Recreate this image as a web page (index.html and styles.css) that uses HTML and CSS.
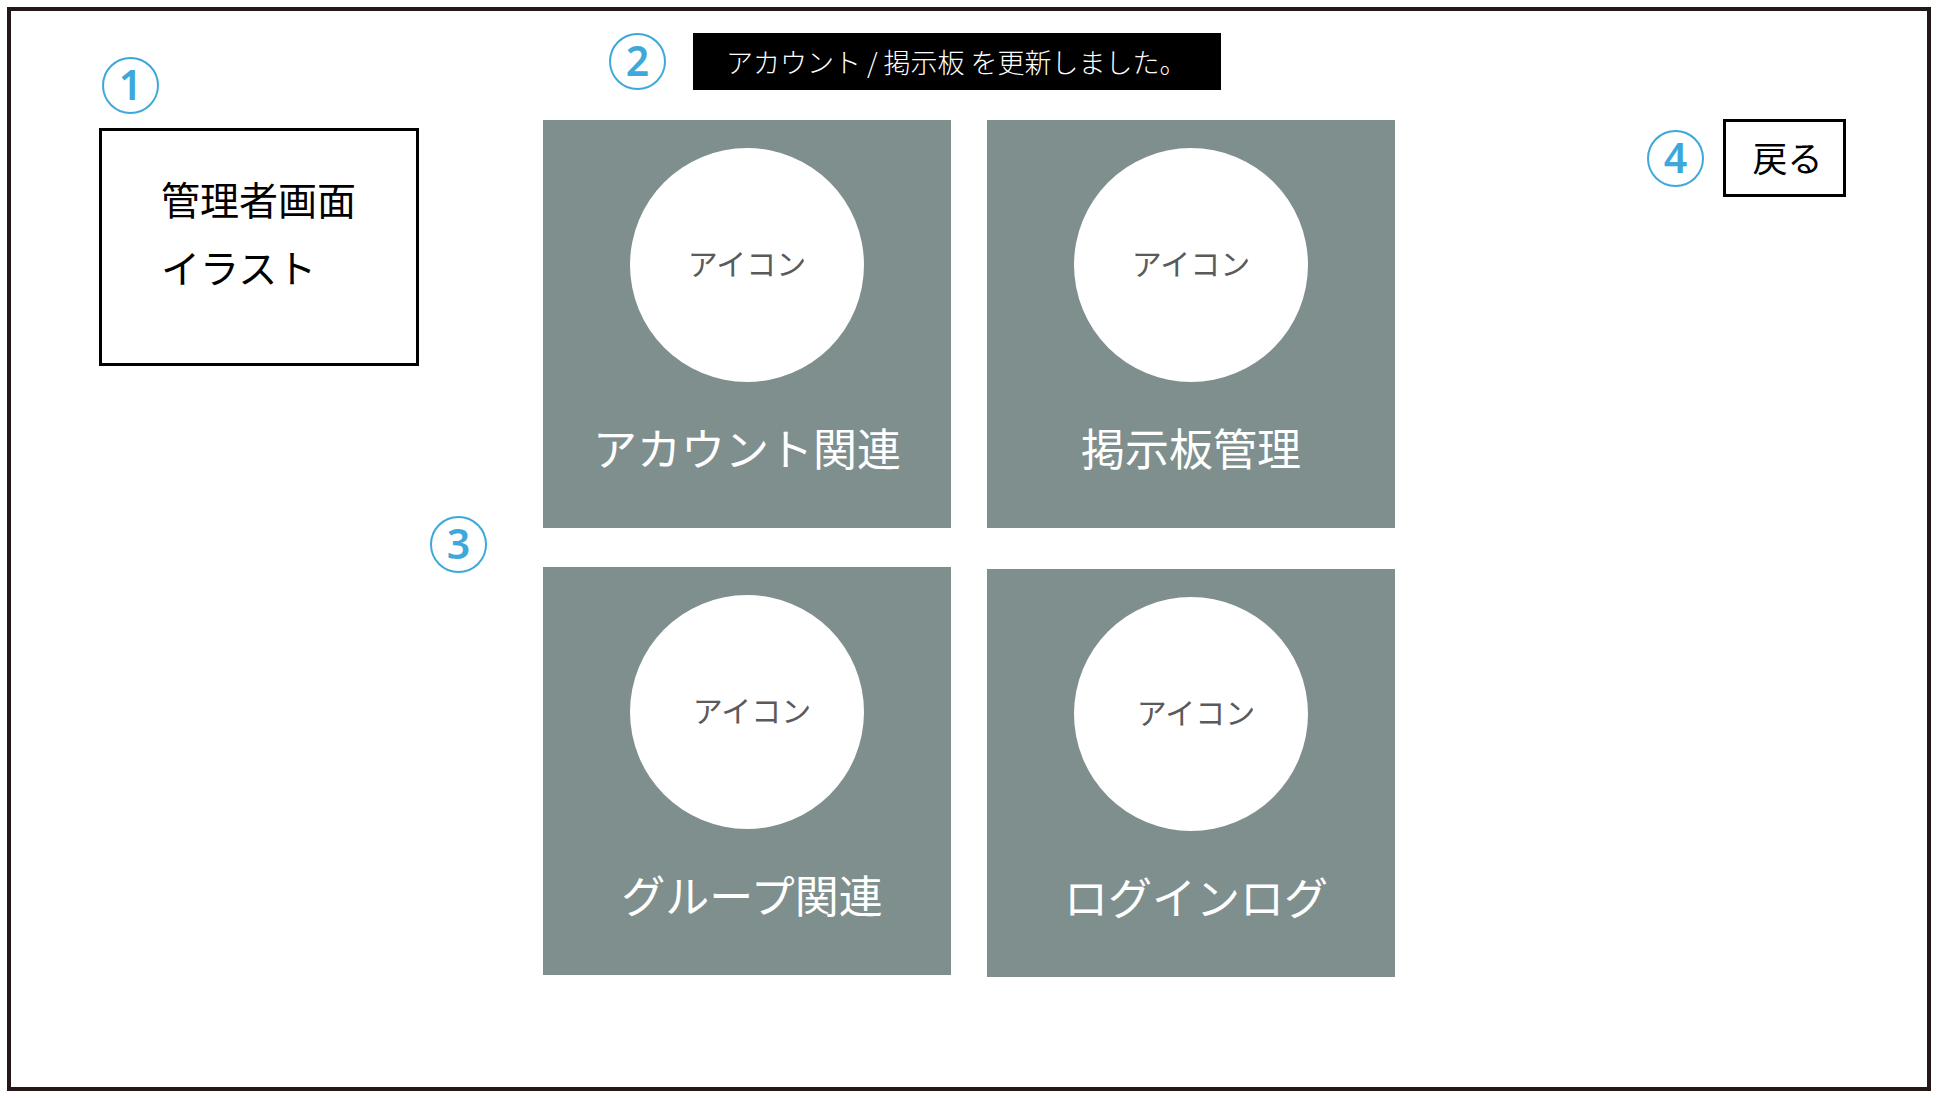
FILE: index.html
```html
<html>
    <head>
        <meta charset="utf-8">
        <title>管理者画面</title>
        <link rel="stylesheet" href="styles.css">
    </head>
    <body>
        <div class="frame">
            <div class="side">
                <div class="marker marker-side">1</div>
                <div class="illust">
                    <div>管理者画面</div>
                    <div>イラスト</div>
                </div>
            </div>

            <main class="center">
                <div class="toast-row">
                    <div class="marker">2</div>
                    <div class="toast">アカウント / 掲示板 を更新しました。</div>
                </div>
                <div class="menu-row">
                    <div class="marker marker-menu">3</div>
                    <div class="menu">
                        <div class="menu-card">
                            <div class="menu-icon">アイコン</div>
                            <div class="menu-label">アカウント関連</div>
                        </div>
                        <div class="menu-card">
                            <div class="menu-icon">アイコン</div>
                            <div class="menu-label">掲示板管理</div>
                        </div>
                        <div class="menu-card menu-card--shift">
                            <div class="menu-icon">アイコン</div>
                            <div class="menu-label">グループ関連</div>
                        </div>
                        <div class="menu-card menu-card--shift menu-card--low">
                            <div class="menu-icon">アイコン</div>
                            <div class="menu-label">ログインログ</div>
                        </div>
                    </div>
                </div>
            </main>

            <div class="right">
                <div class="marker">4</div>
                <div class="back-button">戻る</div>
            </div>
        </div>
    </body>
</html>
```

FILE: styles.css
```css
body {
    margin: 0;
    background: #fff;
    font-family: "Noto Sans CJK JP", "Noto Sans", sans-serif;
    color: #000;
}
.frame {
    margin: 7px;
    width: 1924px;
    height: 1084px;
    box-sizing: border-box;
    border: 4px solid #231815;
    display: flex;
    flex-direction: row;
    align-items: flex-start;
}

/* annotation numbers */
.marker {
    width: 57px;
    height: 57px;
    flex-shrink: 0;
    box-sizing: border-box;
    border: 2.5px solid #3ea8db;
    border-radius: 50%;
    color: #3ea8db;
    font-family: "Noto Sans", sans-serif;
    font-weight: 600;
    font-size: 41px;
    line-height: 50px;
    text-align: center;
}

.side {
    margin-left: 88px;
    padding-top: 46px;
}
    .marker-side {
        margin-left: 3px;
        margin-bottom: 14px;
    }
.illust {
    width: 320px;
    height: 238px;
    box-sizing: border-box;
    border: 3px solid #000;
    padding: 33px 0 0 59px;
    font-size: 39px;
    line-height: 68px;
}

.center {
    margin-left: 11px;
    padding-top: 22px;
}
.toast-row {
    display: flex;
    align-items: center;
    margin-left: 179px;
    gap: 27px;
}
.toast {
    width: 528px;
    height: 57px;
    box-sizing: border-box;
    background: #000;
    color: #fff;
    font-size: 27px;
    font-weight: 300;
    line-height: 57px;
    padding-left: 33px;
}
.menu-row {
    display: flex;
    align-items: flex-start;
    gap: 56px;
    margin-top: 30px;
}
    .marker-menu {
        margin-top: 396px;
    }
.menu {
    display: grid;
    grid-template-columns: 408px 408px;
    column-gap: 36px;
    row-gap: 39px;
}
.menu-card {
    height: 408px;
    background: #7e8f8d;
    display: flex;
    flex-direction: column;
    align-items: center;
}
    .menu-card--low {
        margin-top: 2px;
    }
.menu-icon {
    width: 234px;
    height: 234px;
    margin-top: 28px;
    border-radius: 50%;
    background: #fff;
    color: #5a5a5a;
    font-size: 30px;
    display: flex;
    align-items: center;
    justify-content: center;
    padding-bottom: 6px;
    box-sizing: border-box;
}
.menu-label {
    margin-top: 35px;
    color: #fff;
    font-size: 44px;
    line-height: 60px;
}
    .menu-card--shift .menu-icon,
    .menu-card--shift .menu-label {
        padding-left: 10px;
    }

.right {
    margin-left: auto;
    margin-right: 81px;
    padding-top: 108px;
    display: flex;
    align-items: center;
    gap: 19px;
}
.back-button {
    width: 123px;
    height: 78px;
    box-sizing: border-box;
    border: 3px solid #000;
    font-size: 35px;
    line-height: 70px;
    padding-left: 6px;
    text-align: center;
}
```
